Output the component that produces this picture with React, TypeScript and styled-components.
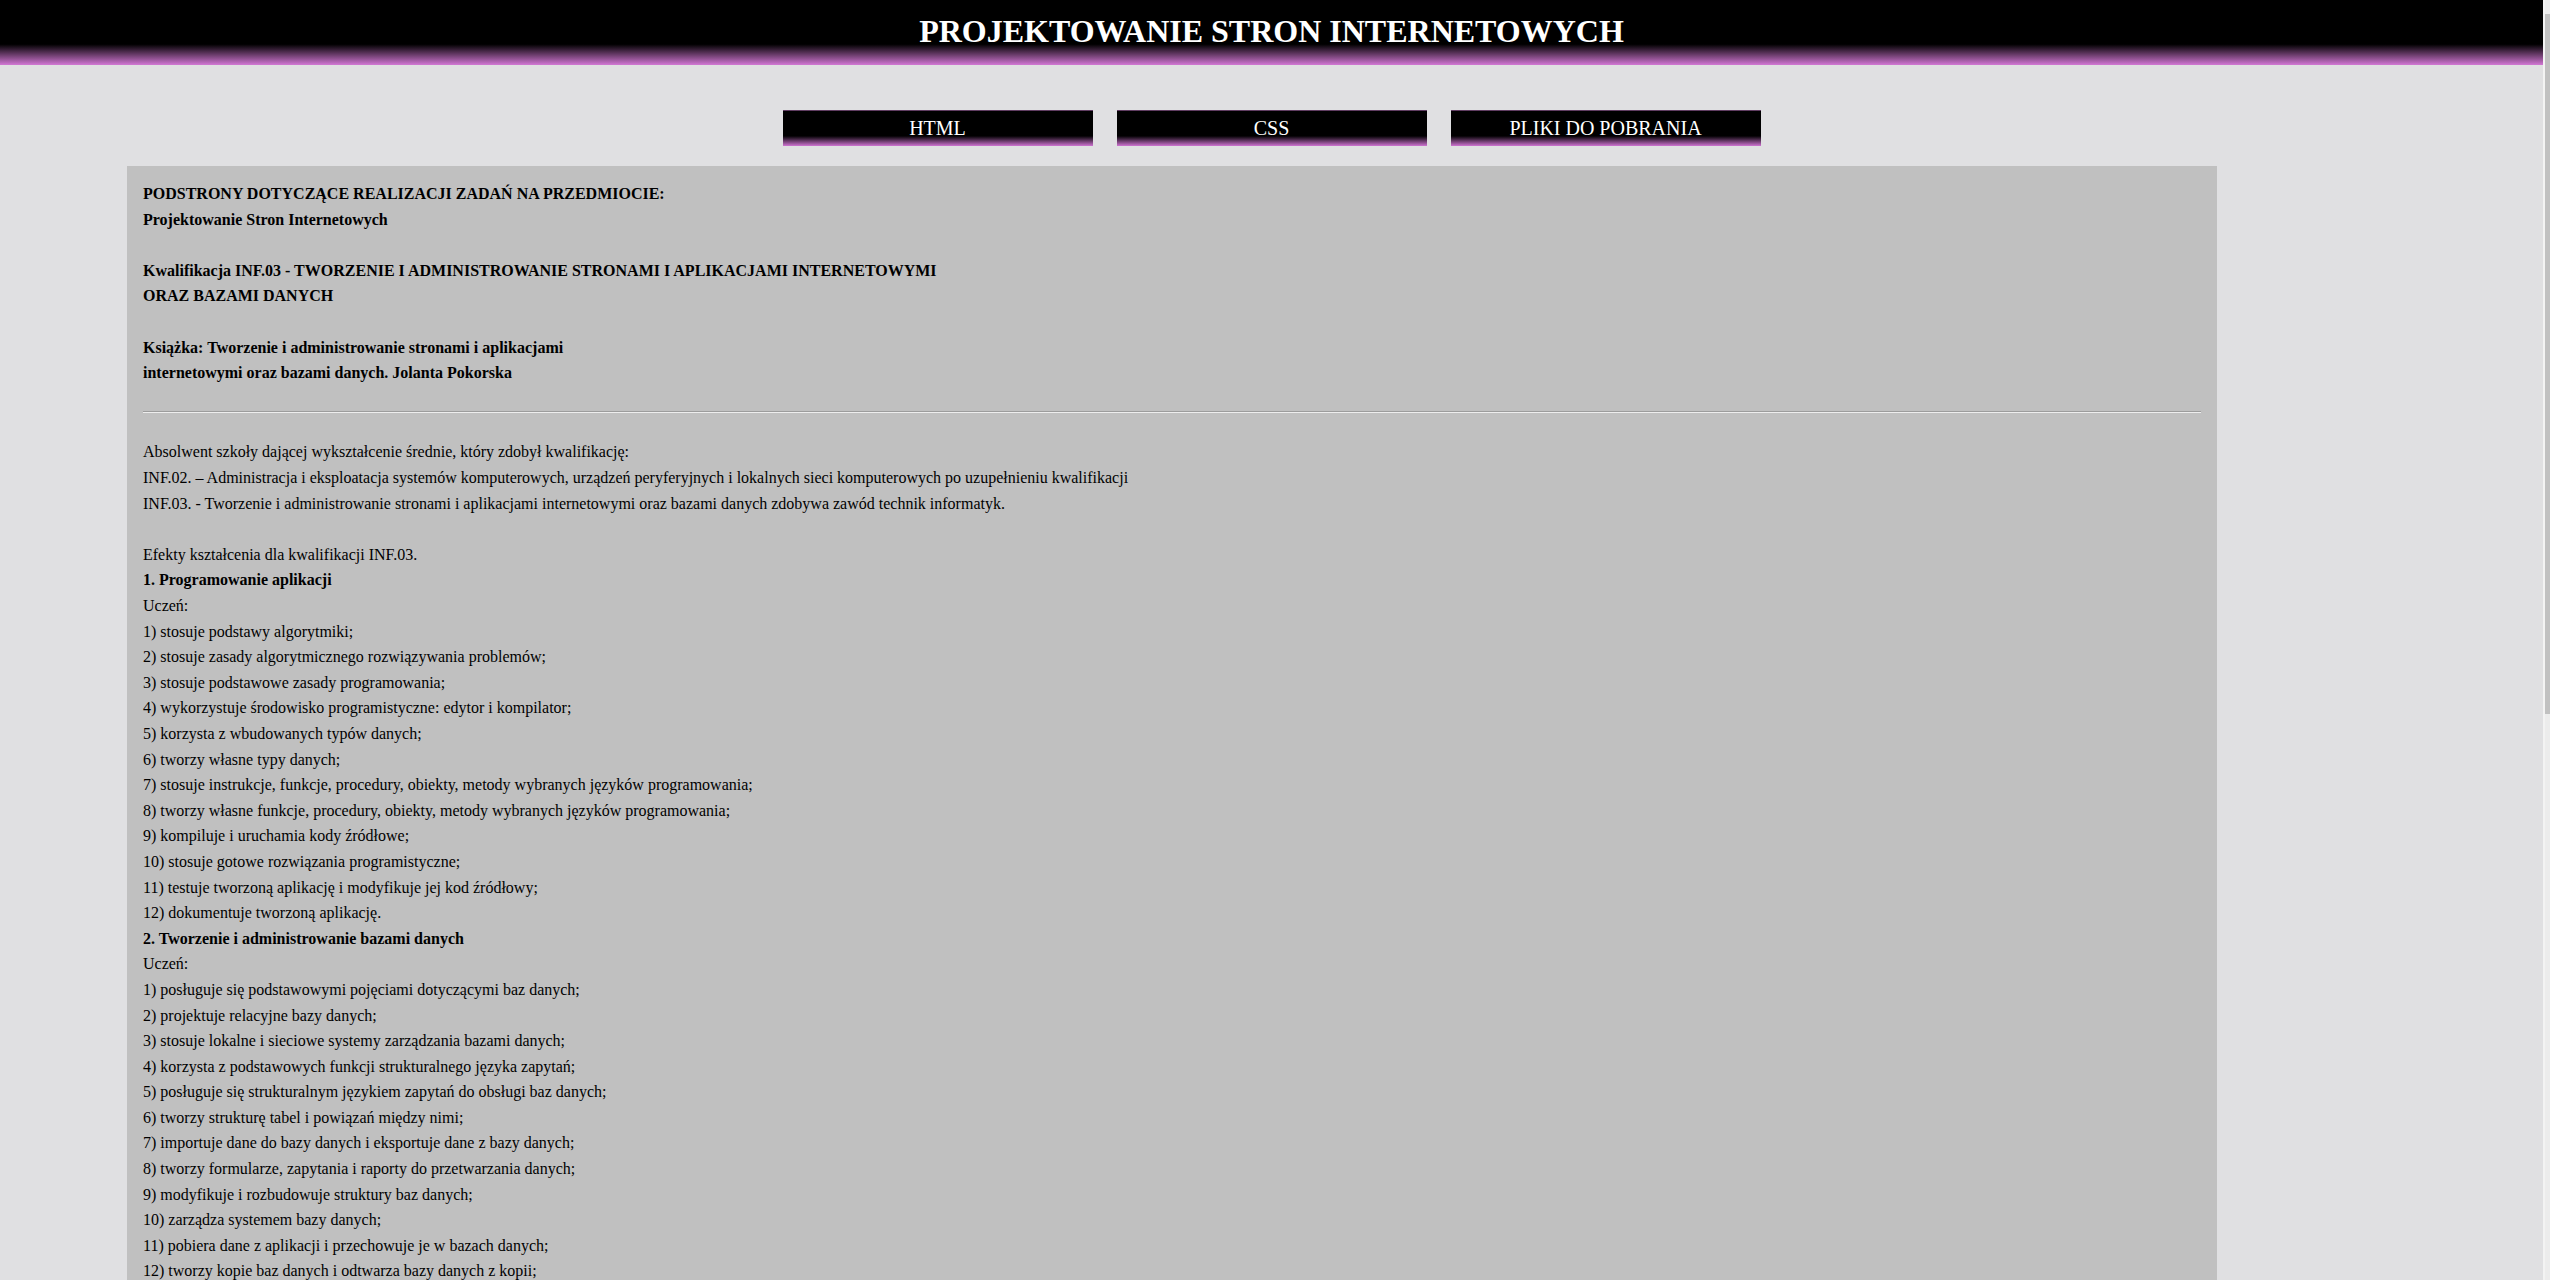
import React from 'react';
import styled, { createGlobalStyle } from 'styled-components';

const GlobalStyle = createGlobalStyle`
  html, body {
    margin: 0;
    padding: 0;
  }
  html {
    scrollbar-width: none;
  }
  ::-webkit-scrollbar {
    display: none;
  }
  body {
    background-color: #e0e0e2;
    font-family: 'Liberation Serif', 'Times New Roman', serif;
    color: #000;
    padding-right: 7px;
  }
`;

// narrow scrollbar drawn over the right edge, as in the screenshot
const ScrollTrack = styled.div`
  position: fixed;
  top: 0;
  right: 0;
  width: 7px;
  height: 100vh;
  box-sizing: border-box;
  border-left: 2px solid #f3f3f3;
  background: #ececec;
`;

const ScrollThumb = styled.div`
  margin-top: 14px;
  height: 700px;
  background: #c1c1c1;
`;

const Header = styled.header`
  height: 65px;
  box-sizing: border-box;
  padding-top: 13px;
  background: linear-gradient(to bottom, #000 0%, #000 68%, #d277d4 100%);
  text-align: center;
`;

const Title = styled.h1`
  margin: 0;
  font-size: 32px;
  line-height: 37px;
  font-weight: bold;
  color: #fff;
`;

const Nav = styled.nav`
  display: flex;
  justify-content: center;
  gap: 24px;
  margin-top: 45px;
`;

const NavButton = styled.a`
  display: block;
  width: 310px;
  height: 36px;
  line-height: 36px;
  text-align: center;
  font-size: 20px;
  color: #fff;
  text-decoration: none;
  background: linear-gradient(
    to bottom,
    #c07ac4 0px,
    #000 1px,
    #000 72%,
    #cf74d2 100%
  );
`;

const Content = styled.section`
  box-sizing: border-box;
  width: 2090px;
  margin: 20px 0 0 127px;
  padding: 15px 16px 40px;
  background-color: #c0c0c0;
  font-size: 16px;
  line-height: 25.6px;
`;

const Intro = styled.div`
  font-weight: bold;
`;

const Divider = styled.hr`
  margin: 25.2px 0 26.5px;
  height: 0;
  border: none;
  border-top: 1px solid #9c9c9c;
  border-bottom: 1px solid #ededed;
`;

const Body = styled.div``;

const Heading = styled.b``;

const programowanie = [
  '1) stosuje podstawy algorytmiki;',
  '2) stosuje zasady algorytmicznego rozwiązywania problemów;',
  '3) stosuje podstawowe zasady programowania;',
  '4) wykorzystuje środowisko programistyczne: edytor i kompilator;',
  '5) korzysta z wbudowanych typów danych;',
  '6) tworzy własne typy danych;',
  '7) stosuje instrukcje, funkcje, procedury, obiekty, metody wybranych języków programowania;',
  '8) tworzy własne funkcje, procedury, obiekty, metody wybranych języków programowania;',
  '9) kompiluje i uruchamia kody źródłowe;',
  '10) stosuje gotowe rozwiązania programistyczne;',
  '11) testuje tworzoną aplikację i modyfikuje jej kod źródłowy;',
  '12) dokumentuje tworzoną aplikację.',
];

const bazy = [
  '1) posługuje się podstawowymi pojęciami dotyczącymi baz danych;',
  '2) projektuje relacyjne bazy danych;',
  '3) stosuje lokalne i sieciowe systemy zarządzania bazami danych;',
  '4) korzysta z podstawowych funkcji strukturalnego języka zapytań;',
  '5) posługuje się strukturalnym językiem zapytań do obsługi baz danych;',
  '6) tworzy strukturę tabel i powiązań między nimi;',
  '7) importuje dane do bazy danych i eksportuje dane z bazy danych;',
  '8) tworzy formularze, zapytania i raporty do przetwarzania danych;',
  '9) modyfikuje i rozbudowuje struktury baz danych;',
  '10) zarządza systemem bazy danych;',
  '11) pobiera dane z aplikacji i przechowuje je w bazach danych;',
  '12) tworzy kopie baz danych i odtwarza bazy danych z kopii;',
];

const Lines = ({ items }: { items: string[] }) => (
  <>
    {items.map((t) => (
      <React.Fragment key={t}>
        {t}
        <br />
      </React.Fragment>
    ))}
  </>
);

const App = () => {
  return (
    <>
      <GlobalStyle />
      <Header>
        <Title>PROJEKTOWANIE STRON INTERNETOWYCH</Title>
      </Header>
      <Nav>
        <NavButton href="#">HTML</NavButton>
        <NavButton href="#">CSS</NavButton>
        <NavButton href="#">PLIKI DO POBRANIA</NavButton>
      </Nav>
      <Content>
        <Intro>
          PODSTRONY DOTYCZĄCE REALIZACJI ZADAŃ NA PRZEDMIOCIE:
          <br />
          Projektowanie Stron Internetowych
          <br />
          <br />
          Kwalifikacja INF.03 - TWORZENIE I ADMINISTROWANIE STRONAMI I APLIKACJAMI INTERNETOWYMI
          <br />
          ORAZ BAZAMI DANYCH
          <br />
          <br />
          Książka: Tworzenie i administrowanie stronami i aplikacjami
          <br />
          internetowymi oraz bazami danych. Jolanta Pokorska
        </Intro>
        <Divider />
        <Body>
          Absolwent szkoły dającej wykształcenie średnie, który zdobył kwalifikację:
          <br />
          INF.02. – Administracja i eksploatacja systemów komputerowych, urządzeń peryferyjnych i lokalnych
          sieci komputerowych po uzupełnieniu kwalifikacji
          <br />
          INF.03. - Tworzenie i administrowanie stronami i aplikacjami internetowymi oraz bazami danych
          zdobywa zawód technik informatyk.
          <br />
          <br />
          Efekty kształcenia dla kwalifikacji INF.03.
          <br />
          <Heading>1. Programowanie aplikacji</Heading>
          <br />
          Uczeń:
          <br />
          <Lines items={programowanie} />
          <Heading>2. Tworzenie i administrowanie bazami danych</Heading>
          <br />
          Uczeń:
          <br />
          <Lines items={bazy} />
        </Body>
      </Content>
      <ScrollTrack>
        <ScrollThumb />
      </ScrollTrack>
    </>
  );
};

export default App;
